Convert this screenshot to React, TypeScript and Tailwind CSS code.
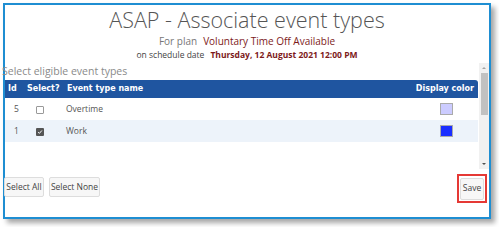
const rows = [
  { id: 5, name: 'Overtime', checked: false, color: '#ccccff', bg: 'bg-white' },
  { id: 1, name: 'Work', checked: true, color: '#1a2eff', bg: 'bg-[#edf3fa]' },
];

function Checkbox({ checked }: { checked: boolean }) {
  if (checked) {
    return (
      <span className="flex h-[8px] w-[8px] items-center justify-center rounded-[1px] bg-[#555]">
        <svg viewBox="0 0 8 8" className="h-[6px] w-[6px]">
          <path d="M1.5 4.2 L3.2 5.8 L6.5 2" fill="none" stroke="white" strokeWidth="1.3" />
        </svg>
      </span>
    );
  }
  return <span className="block h-[8px] w-[8px] rounded-[1px] border border-[#999] bg-white" />;
}

export default function App() {
  return (
    <div className="h-[227px] w-[499px] bg-white pl-[3px] pt-[3px]">
      <div className="flex h-[216px] w-[488px] flex-col border-2 border-[#1e8ed2] bg-white shadow-[4px_4px_5px_rgba(0,0,0,0.35)]">
        {/* Heading */}
        <div className="h-[30px] text-center font-['Open_Sans',sans-serif] text-[21.5px] font-light leading-[30px] text-[#555]">
          ASAP - Associate event types
        </div>
        <div className="h-[13px] text-center font-['Open_Sans',sans-serif] text-[10px] leading-[13px]">
          <span className="text-[#777]">For plan</span>
          <span className="ml-[6px] text-[#7d1a1a]">Voluntary Time Off Available</span>
        </div>
        <div className="h-[13px] text-center font-['Open_Sans',sans-serif] text-[8.5px] leading-[13px]">
          <span className="text-[#444]">on schedule date</span>
          <span className="ml-[6px] font-bold text-[#7d1a1a]">Thursday, 12 August 2021 12:00 PM</span>
        </div>

        {/* Scroll area */}
        <div className="mt-[2px] flex h-[106px]">
          <div className="flex-1">
            <div className="-ml-[3px] h-[17px] font-['Open_Sans',sans-serif] text-[10.5px] leading-[17px] text-[#8a8a8a]">
              Select eligible event types
            </div>
            <div className="mr-[1px]">
              <div className="grid h-[18px] grid-cols-[18px_40px_1fr_66px] items-center rounded-tr-[3px] bg-[#1f55a0] font-['DejaVu_Sans',sans-serif] text-[8px] font-bold text-white">
                <span className="pl-[3px]">Id</span>
                <span className="pl-[4px]">Select?</span>
                <span className="pl-[4px]">Event type name</span>
                <span className="pr-[4px] text-right">Display color</span>
              </div>
              {rows.map((r) => (
                <div
                  key={r.id}
                  className={`grid h-[22px] grid-cols-[18px_40px_1fr_66px] items-center font-['Open_Sans',sans-serif] text-[8.5px] text-[#555] ${r.bg}`}
                >
                  <span className="pl-[9px]">{r.id}</span>
                  <span className="pl-[13px] pt-[2px]">
                    <Checkbox checked={r.checked} />
                  </span>
                  <span className="pl-[3px]">{r.name}</span>
                  <span className="flex justify-center pl-[2px]">
                    <span className="block h-[12px] w-[13px] border border-[#aaa]" style={{ backgroundColor: r.color }} />
                  </span>
                </div>
              ))}
            </div>
          </div>
          {/* Scrollbar */}
          <div className="flex w-[10px] flex-col items-center bg-[#f1f1f1]">
            <svg viewBox="0 0 10 10" className="h-[10px] w-[10px]">
              <path d="M3 6 L5 4 L7 6 Z" fill="#a3a3a3" />
            </svg>
            <div className="h-[42px] w-[7px] bg-[#c1c1c1]" />
            <div className="flex-1" />
            <svg viewBox="0 0 10 10" className="h-[10px] w-[10px]">
              <path d="M3 4 L5 6 L7 4 Z" fill="#505050" />
            </svg>
          </div>
        </div>

        {/* Buttons */}
        <div className="mt-[5px] flex items-start justify-between pr-[2px] font-['Open_Sans',sans-serif] text-[8.5px] text-[#444]">
          <div className="mt-[3px] flex gap-[5px] -ml-[1px]">
            <button className="h-[20px] w-[40px] rounded-[2px] border border-[#ddd] bg-[#f7f7f7]">Select All</button>
            <button className="h-[20px] w-[51px] rounded-[2px] border border-[#ddd] bg-[#f7f7f7]">Select None</button>
          </div>
          <div className="flex h-[29px] w-[30px] items-center justify-center border-2 border-[#e53935]">
            <button className="h-[22px] w-[24px] rounded-[2px] border border-[#ddd] bg-[#f7f7f7]">Save</button>
          </div>
        </div>
      </div>
    </div>
  );
}
